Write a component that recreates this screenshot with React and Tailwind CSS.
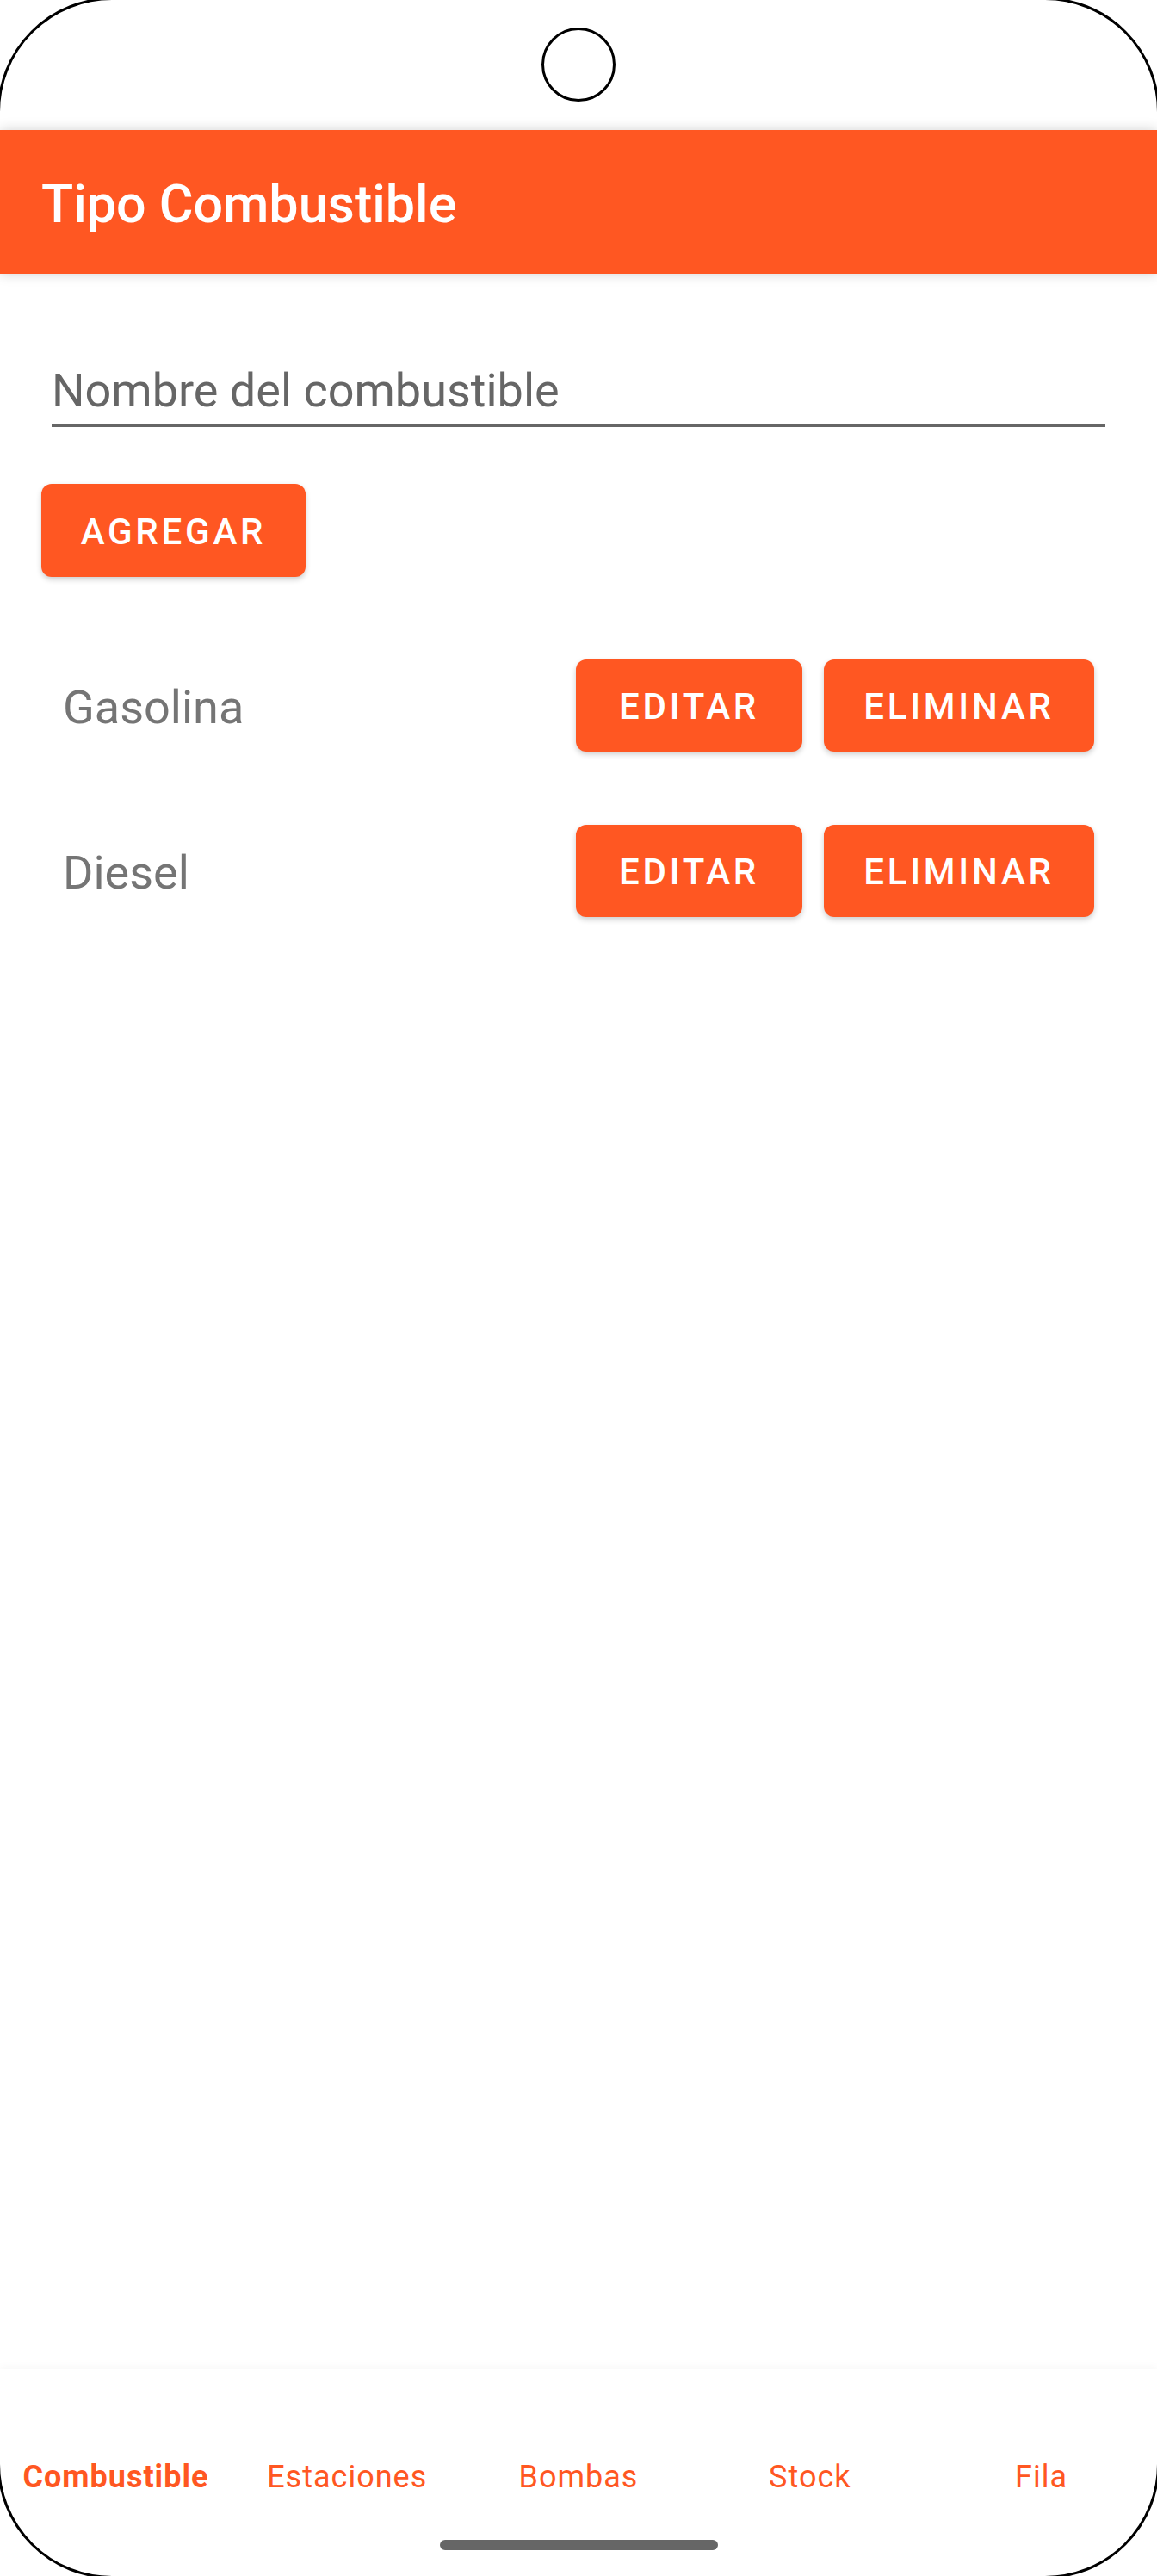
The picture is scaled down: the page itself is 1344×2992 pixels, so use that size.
import React, { useState } from "react";

const tabs = ["Combustible", "Estaciones", "Bombas", "Stock", "Fila"];

function App() {
  const [nombre, setNombre] = useState("");
  const [items] = useState([
    { id: 1, name: "Gasolina" },
    { id: 2, name: "Diesel" },
  ]);
  const [activeTab, setActiveTab] = useState("Combustible");

  return (
    <div className="relative h-[2992px] w-full overflow-hidden bg-white font-['Roboto',sans-serif]">
      <div className="flex h-full flex-col">
        {/* status bar / camera */}
        <div className="flex h-[151px] justify-center">
          <div className="mt-[32px] h-[86px] w-[86px] rounded-full border-[3px] border-black" />
        </div>

        {/* header */}
        <div className="relative z-10 flex h-[167px] items-center bg-[#FF5722] px-[48px] pt-[5px] shadow-[0_0_14px_rgba(0,0,0,0.18)]">
          <h1 className="text-[61px] font-medium leading-none text-white">Tipo Combustible</h1>
        </div>

        {/* content */}
        <div className="flex-1 px-[48px] pt-[104px]">
          <div className="mx-[12px] border-b-[3px] border-[#666] pb-[8px]">
            <input
              value={nombre}
              onChange={(e) => setNombre(e.target.value)}
              placeholder="Nombre del combustible"
              className="block h-[63px] w-full bg-transparent text-[54px] leading-[63px] text-[#333] outline-none placeholder:text-[#666]"
            />
          </div>

          <button className="mt-[66px] flex h-[108px] w-[307px] items-center justify-center rounded-[12px] bg-[#FF5722] pt-[2px] text-[42px] font-medium tracking-[0.09em] text-white shadow-[0_3px_6px_rgba(0,0,0,0.2)]">
            AGREGAR
          </button>

          <div className="mt-[96px] flex flex-col gap-[85px]">
            {items.map((item) => (
              <div key={item.id} className="flex items-center justify-between pl-[25px] pr-[25px]">
                <span className="pt-[4px] text-[54px] leading-none text-[#757575]">{item.name}</span>
                <div className="flex gap-[25px]">
                  <button className="flex h-[107px] w-[263px] items-center justify-center rounded-[12px] bg-[#FF5722] pt-[2px] text-[42px] font-medium tracking-[0.09em] text-white shadow-[0_3px_6px_rgba(0,0,0,0.2)]">
                    EDITAR
                  </button>
                  <button className="flex h-[107px] w-[314px] items-center justify-center rounded-[12px] bg-[#FF5722] pt-[2px] text-[42px] font-medium tracking-[0.09em] text-white shadow-[0_3px_6px_rgba(0,0,0,0.2)]">
                    ELIMINAR
                  </button>
                </div>
              </div>
            ))}
          </div>
        </div>

        {/* bottom tabs */}
        <div className="flex h-[240px] flex-col bg-white shadow-[0_-3px_8px_rgba(0,0,0,0.035)]">
          <div className="grid grid-cols-5 pt-[104px]">
            {tabs.map((tab) => (
              <button
                key={tab}
                onClick={() => setActiveTab(tab)}
                className={
                  activeTab === tab
                    ? "text-center text-[36px] font-bold leading-[43px] tracking-[1px] text-[#FF5722]"
                    : "text-center text-[36px] font-normal leading-[43px] tracking-[1px] text-[#FF5722]"
                }
              >
                {tab}
              </button>
            ))}
          </div>
          <div className="mt-[51px] flex justify-center">
            <div className="h-[12px] w-[323px] rounded-full bg-[#666]" />
          </div>
        </div>
      </div>

      {/* device frame corners */}
      <div className="pointer-events-none absolute -inset-[3px] rounded-[133px] border-[3px] border-black" />
    </div>
  );
}

export default App;
